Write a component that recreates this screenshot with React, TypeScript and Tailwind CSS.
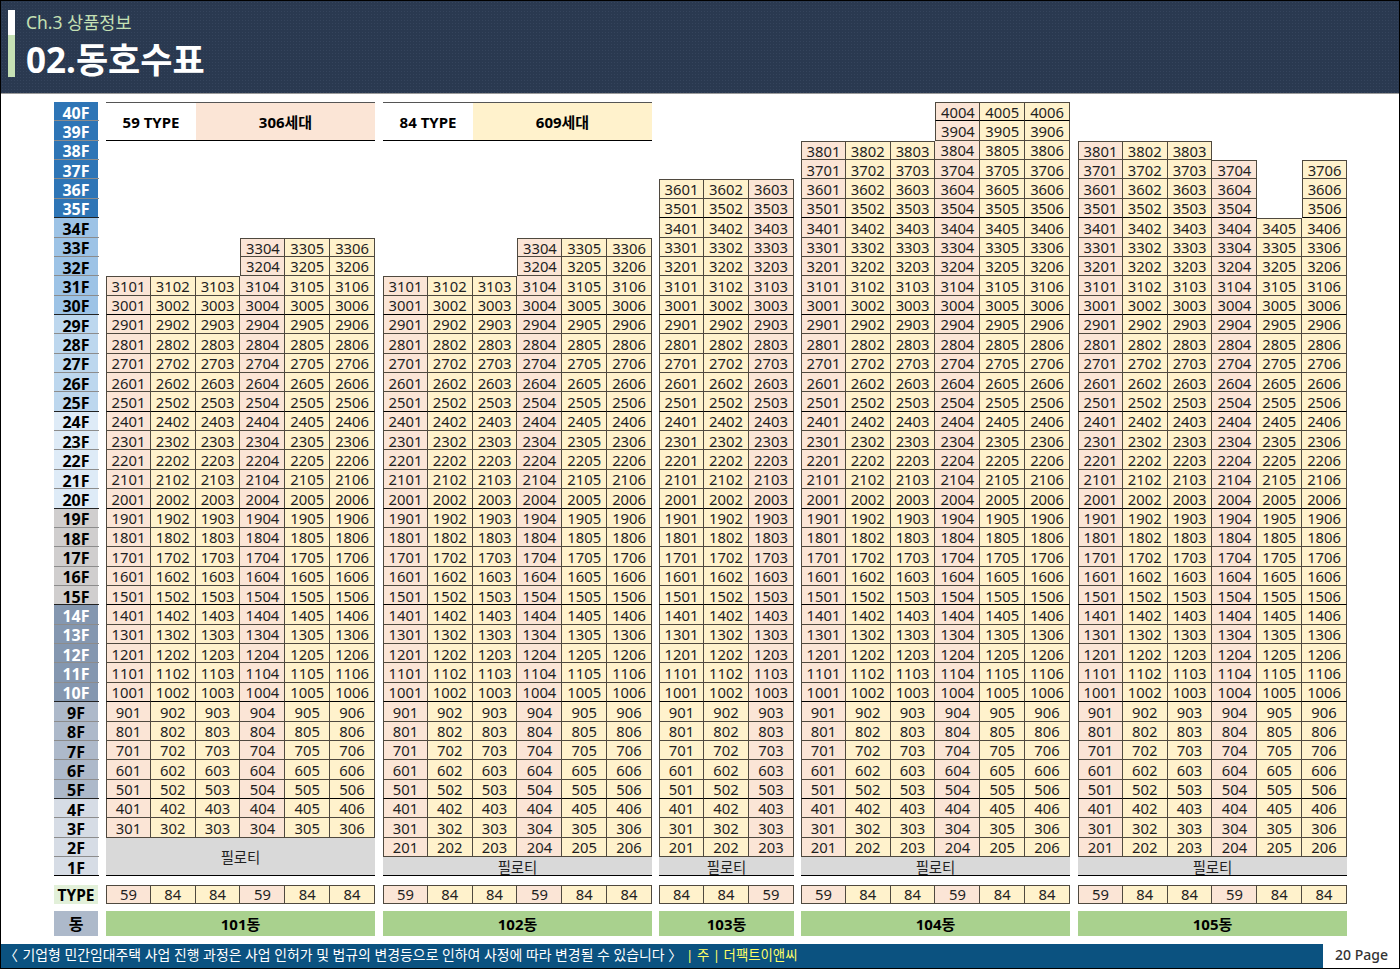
const CJK = "font-['Noto_Sans','Noto_Sans_CJK_KR',sans-serif]";

type Building = {
  name: string;
  types: number[];
  // highest floor for each of the line columns, and lines that skip floors
  tops: number[];
  gaps?: Record<number, number>;
  pilotiRows: number;
  lowest: number;
};

const buildings: Building[] = [
  { name: "101동", types: [59, 84, 84, 59, 84, 84], tops: [31, 31, 31, 33, 33, 33], pilotiRows: 2, lowest: 3 },
  { name: "102동", types: [59, 84, 84, 59, 84, 84], tops: [31, 31, 31, 33, 33, 33], pilotiRows: 1, lowest: 2 },
  { name: "103동", types: [84, 84, 59], tops: [36, 36, 36], pilotiRows: 1, lowest: 2 },
  { name: "104동", types: [59, 84, 84, 59, 84, 84], tops: [38, 38, 38, 40, 40, 40], pilotiRows: 1, lowest: 2 },
  { name: "105동", types: [59, 84, 84, 59, 84, 84], tops: [38, 38, 38, 37, 34, 37], gaps: { 4: 34 }, pilotiRows: 1, lowest: 2 },
];

function floorStyle(f: number) {
  if (f >= 35) return "bg-[#2e75b6] text-white";
  if (f >= 30) return "bg-[#9dc3e6] text-black";
  if (f >= 25) return "bg-[#bdd7ee] text-black";
  if (f >= 20) return "bg-[#deebf7] text-black";
  if (f >= 15) return "bg-[#d0cece] text-black";
  if (f >= 10) return "bg-[#8497b0] text-white";
  if (f >= 5) return "bg-[#adb9ca] text-black";
  return "bg-[#d6dce5] text-black";
}

function FloorColumn() {
  const floors = Array.from({ length: 40 }, (_, i) => 40 - i);
  return (
    <div className="w-[45px] shrink-0">
      {floors.map((f) => (
        <div
          key={f}
          className={`h-[19.36px] border-b ${f % 5 === 0 && f !== 40 ? "border-[#222222]" : f === 1 ? "border-black" : "border-[#8c8c8c]"}`}
        >
          <div className={`w-[44px] h-full pt-[3px] flex items-center justify-center text-[16px] font-bold leading-none ${floorStyle(f)}`}>
            {f}F
          </div>
        </div>
      ))}
      <div className="mt-[8.5px] w-[44px] h-[19px] pt-[2px] flex items-center justify-center bg-[#e2f0d9] text-[15.5px] leading-none font-bold text-black">
        TYPE
      </div>
      <div className="mt-[7.5px] w-[44px] h-[25px] flex items-center justify-center bg-[#adb9ca] text-[16px] font-bold text-black">
        동
      </div>
    </div>
  );
}

function Legend({ type, count, color }: { type: string; count: string; color: string }) {
  return (
    <div className="col-span-6 row-span-2 flex border-t border-b border-t-[#555555] border-b-black">
      <div className="w-[90px] pt-px flex items-center justify-center text-[15px] font-bold text-black">{type}</div>
      <div className={`flex-1 pt-px flex items-center justify-center text-[15px] font-bold text-black ${color}`}>{count}</div>
    </div>
  );
}

function Cell({ label, type, floor, first, top, pad = "pt-[1.5px]" }: { label: string | number; type: number; floor: number; first: boolean; top: boolean; pad?: string }) {
  return (
    <div
      className={`${pad} flex items-center justify-center border-r border-b border-[#4f493f] text-[14.8px] leading-none text-[#1f1f1f] ${
        type === 59 ? "bg-[#fbe5d6]" : "bg-[#fff2cc]"
      } ${first ? "border-l" : ""} ${top ? "border-t" : ""} ${floor % 5 === 0 ? "border-b-black" : ""}`}
    >
      {label}
    </div>
  );
}

function BuildingColumn({ b, index }: { b: Building; index: number }) {
  const cols = b.types.length;
  const floors = Array.from({ length: 40 }, (_, i) => 40 - i);
  const width = cols === 6 ? "w-[269px]" : "w-[135px]";
  const gridCols = cols === 6 ? "grid-cols-6" : "grid-cols-3";

  return (
    <div className={`${width} shrink-0`}>
      <div className={`grid ${gridCols} auto-rows-[19.36px]`}>
        {index === 0 && <Legend type="59 TYPE" count="306세대" color="bg-[#fbe5d6]" />}
        {index === 1 && <Legend type="84 TYPE" count="609세대" color="bg-[#fff2cc]" />}
        {floors.map((f) => {
          if (f > 38 && index < 2) return null;
          if (f < b.lowest) return null;
          return b.types.map((t, c) => {
            const hidden = f > b.tops[c] || (b.gaps && b.gaps[c] !== undefined && f > b.gaps[c] && f <= 37);
            if (hidden) return <div key={`${f}-${c}`} />;
            const missingLeft = c > 0 && f > b.tops[c - 1];
            const no = f * 100 + c + 1;
            return (
              <Cell
                key={`${f}-${c}`}
                label={no}
                type={t}
                floor={f}
                top={f === b.tops[c] || (b.gaps?.[c] !== undefined && f === b.gaps[c])}
                first={c === 0 || missingLeft || (b.gaps !== undefined && c === 5 && f > 34)}
              />
            );
          });
        })}
        <div
          className={`${cols === 6 ? "col-span-6" : "col-span-3"} ${b.pilotiRows === 2 ? "row-span-2 pt-[2px]" : "pt-[4px]"} flex items-center justify-center bg-[#d9d9d9] border-b border-black text-[14.4px] text-[#1f1f1f]`}
        >
          필로티
        </div>
      </div>
      <div className={`mt-[8.5px] grid ${gridCols} h-[19px]`}>
        {b.types.map((t, c) => (
          <Cell key={c} label={t} type={t} floor={1} first={c === 0} top pad="pt-0" />
        ))}
      </div>
      <div className="mt-[7.5px] h-[25px] flex items-center justify-center bg-[#a9d18e] text-[15px] font-bold text-black">
        {b.name}
      </div>
    </div>
  );
}

export default function App() {
  return (
    <div className={`relative w-[1400px] h-[969px] overflow-hidden bg-white border border-black ${CJK}`}>
      <header className="h-[93px] bg-[#2a3950] bg-[radial-gradient(#35445c_1px,transparent_1px)] bg-[length:3px_3px] border-b border-[#9a9a9a] pl-[7px] pt-[9px] flex">
        <div className="w-[7px] h-[67px] flex flex-col">
          <div className="h-[25px] bg-white" />
          <div className="flex-1 bg-[#c5e0b4]" />
        </div>
        <div className="ml-[11px]">
          <div className="text-[17.5px] leading-[25px] text-[#c5e0b4]">Ch.3 상품정보</div>
          <div className="pt-px text-[35px] leading-[48px] font-bold text-white">02.동호수표</div>
        </div>
      </header>
      <main className="pl-[53px] pt-[8px] flex">
        <FloorColumn />
        <div className="flex ml-[7px]">
          <BuildingColumn b={buildings[0]} index={0} />
          <div className="w-[8px]" />
          <BuildingColumn b={buildings[1]} index={1} />
          <div className="w-[7px]" />
          <BuildingColumn b={buildings[2]} index={2} />
          <div className="w-[7px]" />
          <BuildingColumn b={buildings[3]} index={3} />
          <div className="w-[8px]" />
          <BuildingColumn b={buildings[4]} index={4} />
        </div>
      </main>
      <footer className="mt-[8px] flex h-[24px]">
        <div className="w-[1322px] bg-[#0b5280] pl-[9px] pb-[2px] flex items-center whitespace-pre text-[13.9px] text-white">
          <span className="-ml-[6px] mr-[1px]">〈</span>
          <span> 기업형 민간임대주택 사업 진행 과정은 사업 인허가 및 법규의 변경등으로 인하여 사정에 따라 변경될 수 있습니다 〉</span>
          <span className="ml-[4px] text-[13.4px] text-[#ffff66]">| 주 | 더팩트이앤씨</span>
        </div>
        <div className="flex-1 flex items-center pl-[12px] pb-[3px] text-[14px] font-medium text-[#333333]">20 Page</div>
      </footer>
    </div>
  );
}
